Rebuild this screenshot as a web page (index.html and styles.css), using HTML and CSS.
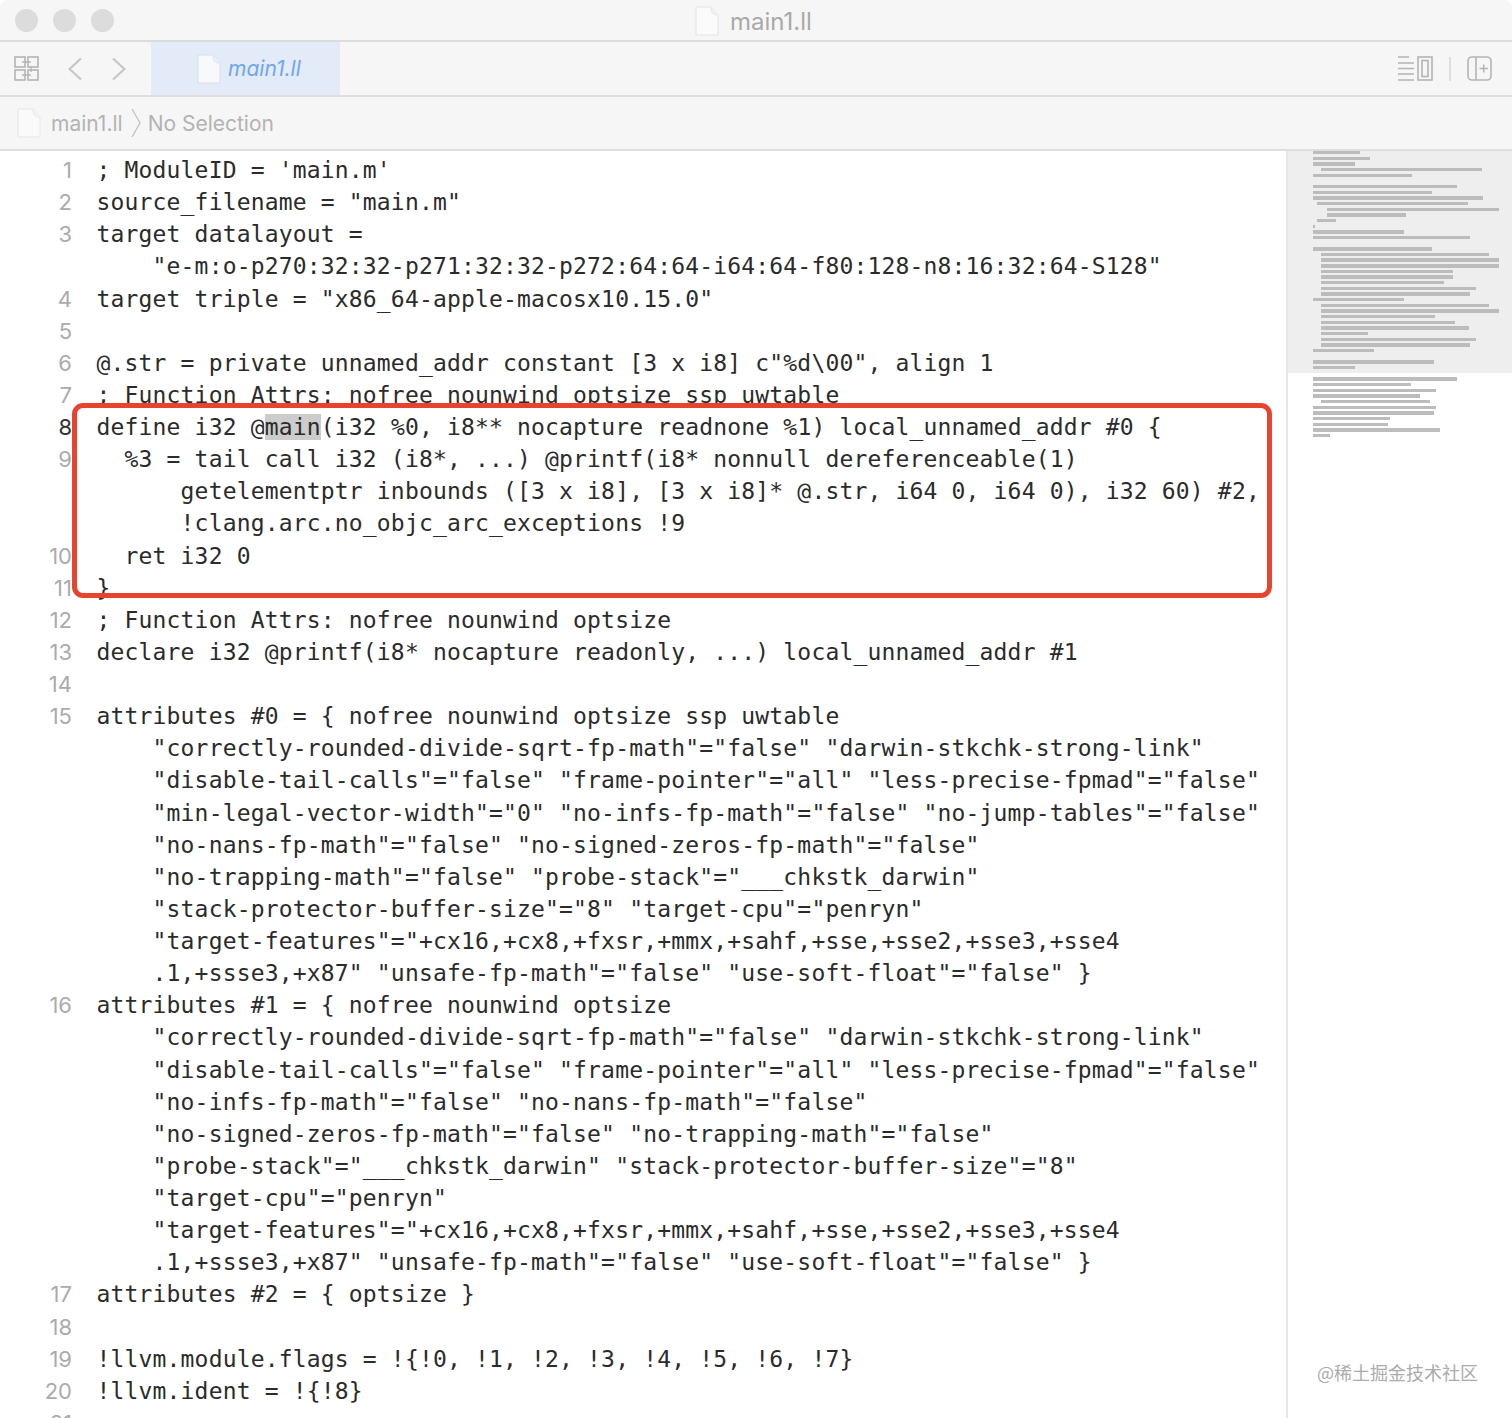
FILE: index.html
```html
<!DOCTYPE html>
<html lang="en">
<head>
<meta charset="utf-8">
<title>main1.ll</title>
<link rel="stylesheet" href="styles.css">
</head>
<body>
<div class="window">
  <header class="titlebar">
    <div class="lights"><i class="light"></i><i class="light"></i><i class="light"></i></div>
    <div class="title">
      <svg class="doc" width="24" height="30" viewBox="0 0 24 30"><path d="M1 1h15l7 8v20H1z" fill="#fbfbfb" stroke="#e2e2e2"/><path d="M16 1c0 5 1 8 7 8" fill="#f2f2f2" stroke="#e6e6e6"/></svg>
      <span>main1.ll</span>
    </div>
  </header>
  <div class="toolbar">
    <svg class="grid-icon" width="25" height="25" viewBox="0 0 25 25" fill="none" stroke="#b4b4b4" stroke-width="1.6"><rect x="1" y="1" width="10" height="10"/><rect x="14" y="1" width="10" height="10"/><rect x="1" y="14" width="10" height="10"/><rect x="14" y="14" width="10" height="10"/><path d="M8 6h9M8 19h9M17 10v6" stroke-width="1.3"/></svg>
    <svg class="chev-back" width="14" height="24" viewBox="0 0 14 24" fill="none" stroke="#c6c6c6" stroke-width="2.2"><path d="M13 1.500 1.500 12 13 22.500"/></svg>
    <svg class="chev-fwd" width="14" height="24" viewBox="0 0 14 24" fill="none" stroke="#c6c6c6" stroke-width="2.2"><path d="M1 1.500 12.500 12 1 22.500"/></svg>
    <div class="tab">
      <svg width="24" height="30" viewBox="0 0 24 30"><path d="M1 1h15l7 8v20H1z" fill="#f7f9fc" stroke="#d8dfe9"/><path d="M16 1c0 5 1 8 7 8" fill="#edf1f6" stroke="#dde3ec"/></svg>
      <span>main1.ll</span>
    </div>
    <div class="tool-right">
      <svg width="35" height="25" viewBox="0 0 35 25" fill="none" stroke="#b4b4b4" stroke-width="1.6"><path d="M0 1h11M0 7h16M0 12.500h16M0 18h16M0 24h16"/><rect x="20" y="1" width="14" height="23"/><rect x="24" y="4.500" width="6" height="16"/></svg>
      <i class="sep"></i>
      <svg width="25" height="25" viewBox="0 0 25 25" fill="none" stroke="#b4b4b4" stroke-width="1.6"><rect x="1" y="1" width="23" height="23" rx="4"/><path d="M9 1v23M12.500 12.500h8.500M16.700 8.500v8"/></svg>
    </div>
  </div>
  <div class="crumbs">
    <svg width="24" height="30" viewBox="0 0 24 30"><path d="M1 1h15l7 8v20H1z" fill="#fafafa" stroke="#e6e6e6"/><path d="M16 1c0 5 1 8 7 8" fill="#f3f3f3" stroke="#ebebeb"/></svg>
    <span class="crumb-file">main1.ll</span>
    <svg class="crumb-sep" width="10" height="30" viewBox="0 0 10 30" fill="none" stroke="#c4c4c4" stroke-width="1.400"><path d="m1 1 8 14-8 14"/></svg>
    <span>No Selection</span>
  </div>
  <main class="body">
    <section class="editor">
      <div class="row"><span class="num">1</span><span class="code">; ModuleID = 'main.m'</span></div>
      <div class="row"><span class="num">2</span><span class="code">source_filename = "main.m"</span></div>
      <div class="row"><span class="num">3</span><span class="code">target datalayout =</span></div>
      <div class="row"><span class="num"></span><span class="code">    "e-m:o-p270:32:32-p271:32:32-p272:64:64-i64:64-f80:128-n8:16:32:64-S128"</span></div>
      <div class="row"><span class="num">4</span><span class="code">target triple = "x86_64-apple-macosx10.15.0"</span></div>
      <div class="row"><span class="num">5</span><span class="code"></span></div>
      <div class="row"><span class="num">6</span><span class="code">@.str = private unnamed_addr constant [3 x i8] c"%d\00", align 1</span></div>
      <div class="row"><span class="num">7</span><span class="code">; Function Attrs: nofree nounwind optsize ssp uwtable</span></div>
      <div class="row"><span class="num current">8</span><span class="code">define i32 @<mark class="hit">main</mark>(i32 %0, i8** nocapture readnone %1) local_unnamed_addr #0 {</span></div>
      <div class="row"><span class="num">9</span><span class="code">  %3 = tail call i32 (i8*, ...) @printf(i8* nonnull dereferenceable(1)</span></div>
      <div class="row"><span class="num"></span><span class="code">      getelementptr inbounds ([3 x i8], [3 x i8]* @.str, i64 0, i64 0), i32 60) #2,</span></div>
      <div class="row"><span class="num"></span><span class="code">      !clang.arc.no_objc_arc_exceptions !9</span></div>
      <div class="row"><span class="num">10</span><span class="code">  ret i32 0</span></div>
      <div class="row"><span class="num">11</span><span class="code">}</span></div>
      <div class="row"><span class="num">12</span><span class="code">; Function Attrs: nofree nounwind optsize</span></div>
      <div class="row"><span class="num">13</span><span class="code">declare i32 @printf(i8* nocapture readonly, ...) local_unnamed_addr #1</span></div>
      <div class="row"><span class="num">14</span><span class="code"></span></div>
      <div class="row"><span class="num">15</span><span class="code">attributes #0 = { nofree nounwind optsize ssp uwtable</span></div>
      <div class="row"><span class="num"></span><span class="code">    "correctly-rounded-divide-sqrt-fp-math"="false" "darwin-stkchk-strong-link"</span></div>
      <div class="row"><span class="num"></span><span class="code">    "disable-tail-calls"="false" "frame-pointer"="all" "less-precise-fpmad"="false"</span></div>
      <div class="row"><span class="num"></span><span class="code">    "min-legal-vector-width"="0" "no-infs-fp-math"="false" "no-jump-tables"="false"</span></div>
      <div class="row"><span class="num"></span><span class="code">    "no-nans-fp-math"="false" "no-signed-zeros-fp-math"="false"</span></div>
      <div class="row"><span class="num"></span><span class="code">    "no-trapping-math"="false" "probe-stack"="___chkstk_darwin"</span></div>
      <div class="row"><span class="num"></span><span class="code">    "stack-protector-buffer-size"="8" "target-cpu"="penryn"</span></div>
      <div class="row"><span class="num"></span><span class="code">    "target-features"="+cx16,+cx8,+fxsr,+mmx,+sahf,+sse,+sse2,+sse3,+sse4</span></div>
      <div class="row"><span class="num"></span><span class="code">    .1,+ssse3,+x87" "unsafe-fp-math"="false" "use-soft-float"="false" }</span></div>
      <div class="row"><span class="num">16</span><span class="code">attributes #1 = { nofree nounwind optsize</span></div>
      <div class="row"><span class="num"></span><span class="code">    "correctly-rounded-divide-sqrt-fp-math"="false" "darwin-stkchk-strong-link"</span></div>
      <div class="row"><span class="num"></span><span class="code">    "disable-tail-calls"="false" "frame-pointer"="all" "less-precise-fpmad"="false"</span></div>
      <div class="row"><span class="num"></span><span class="code">    "no-infs-fp-math"="false" "no-nans-fp-math"="false"</span></div>
      <div class="row"><span class="num"></span><span class="code">    "no-signed-zeros-fp-math"="false" "no-trapping-math"="false"</span></div>
      <div class="row"><span class="num"></span><span class="code">    "probe-stack"="___chkstk_darwin" "stack-protector-buffer-size"="8"</span></div>
      <div class="row"><span class="num"></span><span class="code">    "target-cpu"="penryn"</span></div>
      <div class="row"><span class="num"></span><span class="code">    "target-features"="+cx16,+cx8,+fxsr,+mmx,+sahf,+sse,+sse2,+sse3,+sse4</span></div>
      <div class="row"><span class="num"></span><span class="code">    .1,+ssse3,+x87" "unsafe-fp-math"="false" "use-soft-float"="false" }</span></div>
      <div class="row"><span class="num">17</span><span class="code">attributes #2 = { optsize }</span></div>
      <div class="row"><span class="num">18</span><span class="code"></span></div>
      <div class="row"><span class="num">19</span><span class="code">!llvm.module.flags = !{!0, !1, !2, !3, !4, !5, !6, !7}</span></div>
      <div class="row"><span class="num">20</span><span class="code">!llvm.ident = !{!8}</span></div>
      <div class="row"><span class="num">21</span><span class="code"></span></div>
      <div class="callout"></div>
    </section>
    <aside class="minimap">
      <div class="viewport"></div>
      <div class="mini-lines">
        <i style="width:47px"></i><i style="width:57px"></i><i style="width:42px"></i><i style="margin-left:8px;width:161px"></i><i style="width:99px"></i><i></i>
        <i style="width:144px"></i><i style="width:119px"></i><i style="width:170px"></i><i style="margin-left:4px;width:151px"></i><i style="margin-left:14px;width:172px"></i><i style="margin-left:14px;width:79px"></i><i style="margin-left:4px;width:19px"></i><i style="width:2px"></i><i style="width:91px"></i><i style="width:157px"></i><i></i>
        <i style="width:119px"></i><i style="margin-left:8px;width:168px"></i><i style="margin-left:8px;width:178px"></i><i style="margin-left:8px;width:178px"></i><i style="margin-left:8px;width:132px"></i><i style="margin-left:8px;width:132px"></i><i style="margin-left:8px;width:123px"></i><i style="margin-left:8px;width:155px"></i><i style="margin-left:8px;width:149px"></i>
        <i style="width:91px"></i><i style="margin-left:8px;width:168px"></i><i style="margin-left:8px;width:178px"></i><i style="margin-left:8px;width:114px"></i><i style="margin-left:8px;width:134px"></i><i style="margin-left:8px;width:148px"></i><i style="margin-left:8px;width:47px"></i><i style="margin-left:8px;width:155px"></i><i style="margin-left:8px;width:149px"></i>
        <i style="width:61px"></i><i></i><i style="width:121px"></i><i style="width:42px"></i><i></i>
        <i style="width:144px"></i><i style="width:98px"></i><i style="width:123px"></i><i style="width:107px"></i><i style="margin-left:8px;width:109px"></i><i style="width:123px"></i><i style="width:121px"></i><i style="width:77px"></i><i style="width:75px"></i><i style="width:127px"></i><i style="width:17px"></i>
      </div>
      <div class="watermark">@稀土掘金技术社区</div>
    </aside>
  </main>
</div>
</body>
</html>
```
FILE: styles.css
```css
* { box-sizing: border-box; }
html, body { margin: 0; height: 100%; overflow: hidden; background: #fff; }
.window { height: 1418px; display: flex; flex-direction: column; overflow: hidden; font-family: Inter, "Liberation Sans", sans-serif; }

.titlebar { height: 42px; flex: none; display: flex; align-items: center; position: relative; background: #f6f6f6; border-bottom: 2px solid #dcdcdc; border-radius: 8px 8px 0 0; }
.lights { display: flex; gap: 15px; padding-left: 15px; }
.light { width: 23px; height: 23px; border-radius: 50%; background: #dcdcdc; }
.title { position: absolute; left: 695px; top: 6px; display: flex; align-items: center; gap: 11px; font-size: 24px; color: #a9a9a9; }

.toolbar { height: 55px; flex: none; display: flex; align-items: center; background: #f6f6f6; border-bottom: 2px solid #dedede; padding-left: 14px; }
.grid-icon { flex: none; margin-right: 29px; }
.chev-back { flex: none; margin-right: 30px; }
.chev-fwd { flex: none; margin-right: 25px; }
.tab { width: 189px; height: 53px; flex: none; display: flex; align-items: center; gap: 7px; padding-left: 46px; background: #e2ebf7; color: #6fa6ee; font-size: 21px; font-style: italic; }
.tool-right { margin-left: auto; display: flex; align-items: center; padding-right: 20px; }
.sep { width: 2px; height: 24px; margin: 0 16px; background: #dedede; }

.crumbs { height: 54px; flex: none; display: flex; align-items: center; background: #f6f6f6; border-bottom: 2px solid #dedede; padding-left: 17px; font-size: 21px; color: #b3b3b3; }
.crumb-file { margin-left: 10px; }
.crumb-sep { margin: 0 7px 0 8px; }

.body { flex: 1; min-height: 0; display: flex; }
.editor { width: 1286px; flex: none; padding-top: 3px; position: relative; background: #fff; }
.row { height: 32.140px; display: flex; align-items: center; white-space: pre; }
.num { width: 72px; flex: none; text-align: right; font-size: 22px; color: #ababab; }
.num.current { color: #333; }
.code { padding-left: 24.500px; font-family: "DejaVu Sans Mono", "Liberation Mono", monospace; font-size: 23px; letter-spacing: 0.170px; color: #2b2b2b; }
.hit { background: #ccc; color: inherit; }
.callout { position: absolute; left: 72px; top: 252px; width: 1200px; height: 195px; border: 5px solid #e8432e; border-radius: 11px; }

.minimap { flex: 1; position: relative; border-left: 2px solid #e6e6e6; background: #fff; }
.viewport { position: absolute; left: 0; right: 0; top: 0; height: 222px; background: #eee; }
.mini-lines { position: relative; padding: 0 0 0 25px; display: flex; flex-direction: column; align-items: flex-start; }
.mini-lines i { display: block; height: 3.400px; margin-bottom: 2.270px; background: #bcbcbc; }
.watermark { position: absolute; left: 29px; top: 1208px; font-family: "Noto Sans CJK SC", sans-serif; font-size: 18px; color: #ababab; white-space: nowrap; }
```
